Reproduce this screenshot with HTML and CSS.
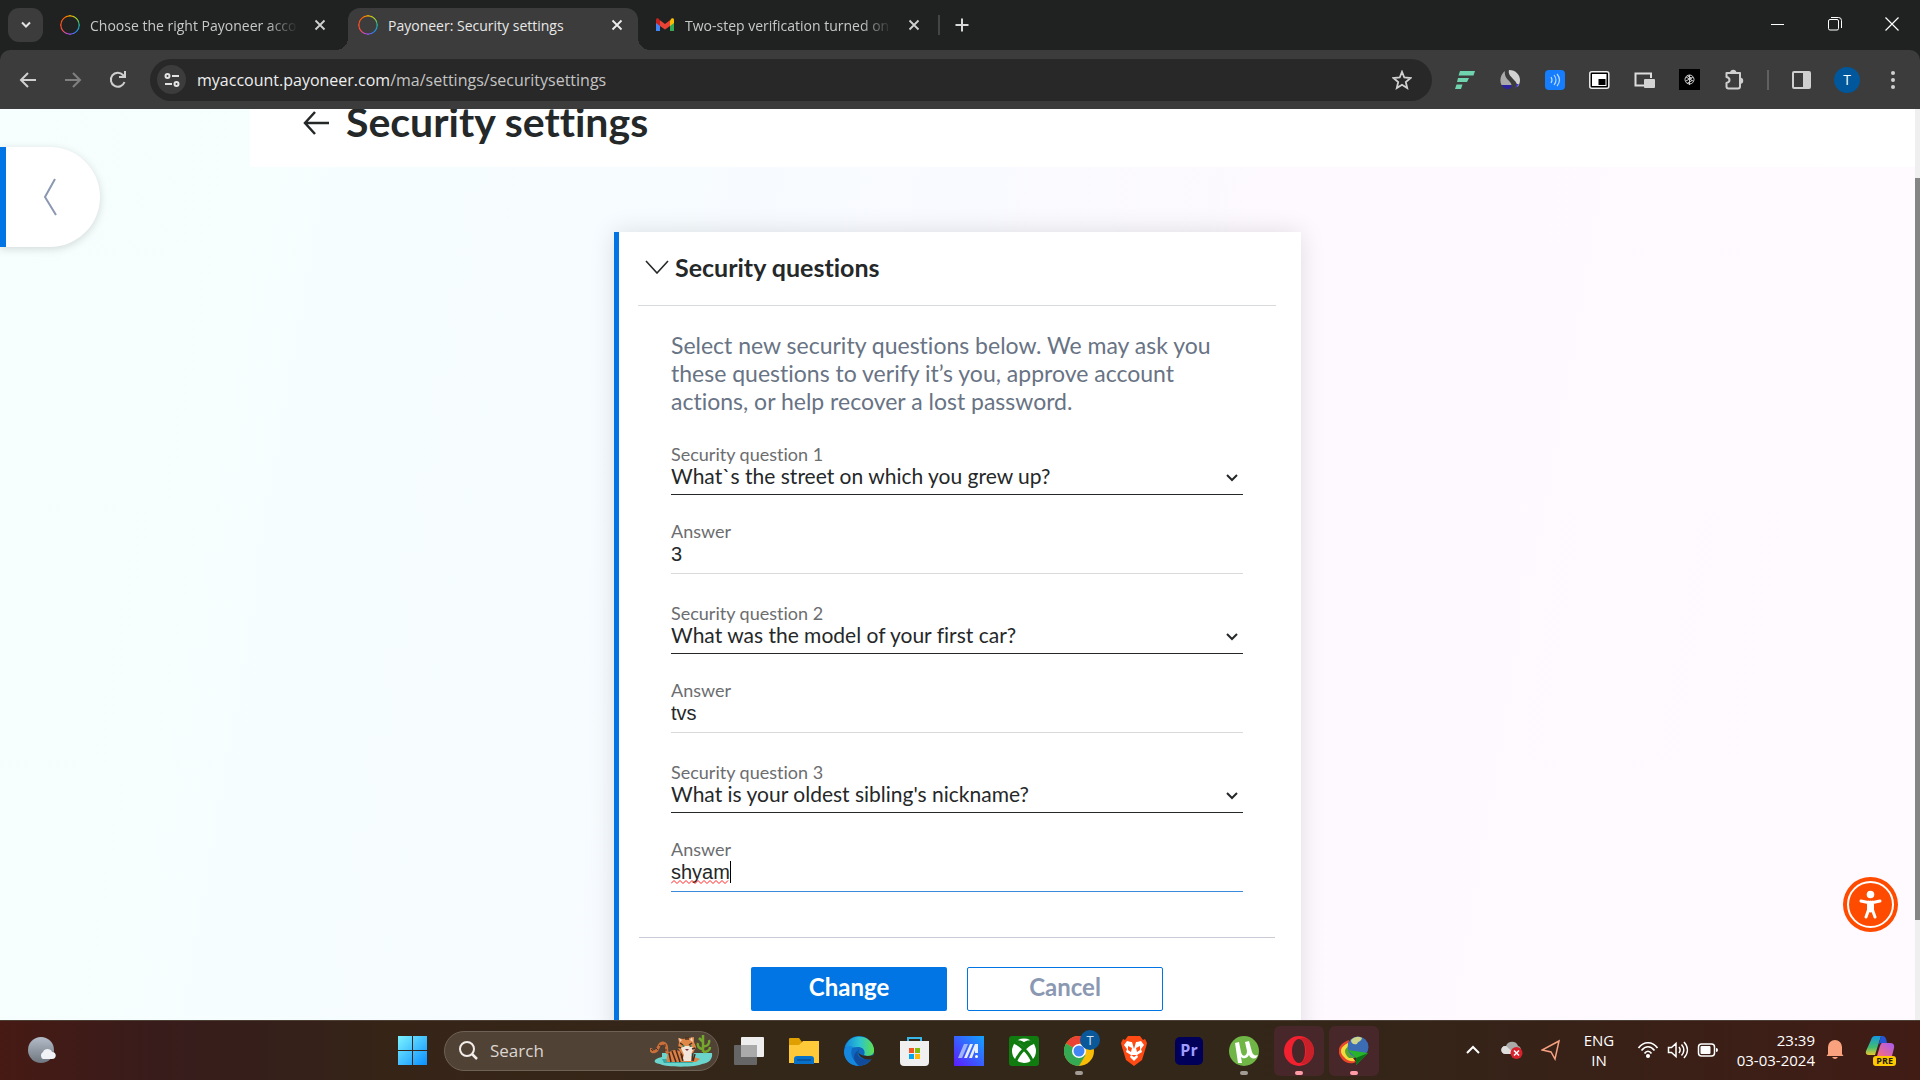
FILE: index.html
```html
<!DOCTYPE html>
<html lang="en">
<head>
<meta charset="utf-8">
<title>Payoneer: Security settings</title>
<link rel="stylesheet" href="styles.css">
</head>
<body>
<header class="tabstrip">
  <button class="tab-search" aria-label="Search tabs"><svg width="12" height="8" viewBox="0 0 12 8"><path d="M2 1.5l4 4 4-4" fill="none" stroke="#e3e3e3" stroke-width="2"/></svg></button>
  <div class="tab first">
    <span class="ring"></span>
    <span class="tab-title fade">Choose the right Payoneer acco</span>
    <button class="tab-close" aria-label="Close tab"><svg width="12" height="12" viewBox="0 0 12 12"><path d="M1.500 1.500l9 9m0-9l-9 9" stroke="#d0d0d0" stroke-width="1.800"/></svg></button>
  </div>
  <div class="tab active">
    <span class="ring"></span>
    <span class="tab-title">Payoneer: Security settings</span>
    <button class="tab-close" aria-label="Close tab"><svg width="12" height="12" viewBox="0 0 12 12"><path d="M1.500 1.500l9 9m0-9l-9 9" stroke="#eee" stroke-width="1.800"/></svg></button>
  </div>
  <div class="tab last">
    <svg width="20" height="20" viewBox="0 0 20 20"><path d="M1 5v11h4V8z" fill="#4285f4"/><path d="M19 5v11h-4V8z" fill="#34a853"/><path d="M1 4.500V8l4 3V5.600L3.500 3.500C2.300 2.700 1 3.500 1 4.500z" fill="#c5221f"/><path d="M19 4.500V8l-4 3V5.600l1.500-2.100c1.200-.8 2.500 0 2.500 1z" fill="#fbbc04"/><path d="M5 5.300l5 3.700 5-3.700V11l-5 3.500L5 11z" fill="#ea4335"/></svg>
    <span class="tab-title fade">Two-step verification turned on</span>
    <button class="tab-close" aria-label="Close tab"><svg width="12" height="12" viewBox="0 0 12 12"><path d="M1.500 1.500l9 9m0-9l-9 9" stroke="#d0d0d0" stroke-width="1.800"/></svg></button>
  </div>
  <span class="tab-sep"></span>
  <button class="new-tab" aria-label="New tab"><svg width="14" height="14" viewBox="0 0 14 14"><path d="M7 .5v13M.5 7h13" stroke="#d8d8d8" stroke-width="2"/></svg></button>
  <div class="window-controls">
    <button aria-label="Minimize"><svg width="14" height="14" viewBox="0 0 14 14"><path d="M0 7.500h13" stroke="#fff"/></svg></button>
    <button aria-label="Restore"><svg width="14" height="14" viewBox="0 0 14 14" fill="none" stroke="#fff"><rect x=".5" y="2.500" width="10" height="10.500" rx="1.500"/><path d="M3 .5h7.500a3 3 0 0 1 3 3V11"/></svg></button>
    <button aria-label="Close"><svg width="14" height="14" viewBox="0 0 14 14"><path d="M.5.5l13 13m0-13l-13 13" stroke="#fff" stroke-width="1.200"/></svg></button>
  </div>
</header>

<nav class="toolbar" aria-label="Browser toolbar">
  <button aria-label="Back"><svg width="20" height="20" viewBox="0 0 20 20"><path d="M18 10H3m7-7l-7 7 7 7" fill="none" stroke="#d0d0d0" stroke-width="2"/></svg></button>
  <button aria-label="Forward"><svg width="20" height="20" viewBox="0 0 20 20"><path d="M2 10h15m-7-7l7 7-7 7" fill="none" stroke="#808080" stroke-width="2"/></svg></button>
  <button aria-label="Reload"><svg width="20" height="20" viewBox="0 0 20 20"><path d="M16.500 12A7 7 0 1 1 15 5l2 2" fill="none" stroke="#d0d0d0" stroke-width="2"/><path d="M11 8h7V1h-2v5h-5z" fill="#d0d0d0"/></svg></button>
  <div class="omnibox">
    <button class="site-info" aria-label="Site information"><svg width="18" height="18" viewBox="0 0 18 18" fill="none" stroke="#e3e3e3" stroke-width="2"><circle cx="4.500" cy="5" r="2"/><path d="M9 5h7M2 13h7"/><circle cx="13.500" cy="13" r="2"/></svg></button>
    <p class="url">myaccount.payoneer.com<span>/ma/settings/securitysettings</span></p>
    <button class="star" aria-label="Bookmark"><svg width="20" height="20" viewBox="0 0 20 20"><path d="M10 1.800l2.300 5.700 6.200.5-4.700 4 1.400 6-5.200-3.200L4.800 18l1.400-6-4.700-4 6.200-.5z" fill="none" stroke="#d0d0d0" stroke-width="1.800"/></svg></button>
  </div>
  <div class="extensions">
    <button aria-label="Tasks extension"><svg width="20" height="20" viewBox="0 0 20 20" fill="#6fd3ad"><path d="M5 1h15l-1.500 4.500H3.500zM3 8h11l-2 4H2zM1.500 14.500h6L6 19H0z"/></svg></button>
    <button aria-label="Similarweb"><svg width="20" height="20" viewBox="0 0 20 20"><path d="M5 1C1 4-1 10 1.500 15h10c0-4-8-6-6.500-14z" fill="#aaa"/><path d="M1.500 15c3 5 8 5 10 2v-2z" fill="#2c22a0"/><path d="M9 0c7 0 11 5 11 10 0 3-1 5-2.500 7C18 10 7 7 9 0z" fill="#d3d3d3"/><path d="M16.500 14h2.500l-4 5z" fill="#4136cf"/></svg></button>
    <button aria-label="Reader"><svg width="20" height="20" viewBox="0 0 20 20"><rect width="20" height="20" rx="4" fill="#167dff"/><path d="M6 7q2 3 0 6M9 5q4 5 0 10M12 4q5 6 0 12" fill="none" stroke="#b9d9ff" stroke-width="1.200"/></svg></button>
    <button aria-label="Picture in picture"><svg width="21" height="20" viewBox="0 0 21 20"><rect x=".8" y="1.800" width="19" height="16.500" rx="2" fill="#000" stroke="#eee" stroke-width="1.500"/><rect x="3" y="4" width="14.500" height="12" fill="#fff"/><rect x="9.500" y="9" width="7" height="6" fill="#000"/></svg></button>
    <button aria-label="Pop out"><svg width="21" height="20" viewBox="0 0 21 20"><path d="M17 8V3.500H1.500v12H10" fill="none" stroke="#ddd" stroke-width="2"/><rect x="10" y="9" width="11" height="9" rx="1" fill="#d3d3d3"/></svg></button>
    <button aria-label="Assistant"><svg width="21" height="21" viewBox="0 0 21 21"><rect width="21" height="21" fill="#000"/><g fill="none" stroke="#ccc"><circle cx="10.500" cy="10.500" r="4.500"/><path d="M7 8l7 4m0-4l-7 4m3.500-6v10M8 14.500l5-3M8 6.500l5 3"/></g></svg></button>
    <button aria-label="Extensions"><svg width="21" height="21" viewBox="0 0 21 21"><path d="M2.500 4H16v13.500q0 2-2 2H4.500q-2 0-2-2V14c4-1 4-5 0-6z" fill="none" stroke="#d0d0d0" stroke-width="2" stroke-linejoin="round"/><path d="M6 3.500a3.300 3.300 0 0 1 6.500 0zM16.500 8.500a3.300 3.300 0 0 1 0 6.500z" fill="#d0d0d0"/></svg></button>
  </div>
  <span class="toolbar-sep"></span>
  <button aria-label="Side panel"><svg width="19" height="20" viewBox="0 0 19 20"><rect x="1" y="2" width="17" height="16" rx="1" fill="none" stroke="#d0d0d0" stroke-width="2"/><path d="M11 2h7v16h-7z" fill="#d0d0d0"/></svg></button>
  <button class="avatar" aria-label="Profile">T</button>
  <button aria-label="Menu"><svg width="6" height="20" viewBox="0 0 6 20" fill="#d0d0d0"><circle cx="3" cy="3" r="2"/><circle cx="3" cy="10" r="2"/><circle cx="3" cy="17" r="2"/></svg></button>
</nav>

<main class="viewport">
  <div class="page">
    <header class="page-header">
      <a href="#" aria-label="Back"><svg width="27" height="24" viewBox="0 0 27 24"><path d="M26 12H2M12 1L2 12l10 11" fill="none" stroke="#252829" stroke-width="2.500"/></svg></a>
      <h1>Security settings</h1>
    </header>
    <button class="collapse" aria-label="Open menu"><svg width="14" height="38" viewBox="0 0 14 38"><path d="M12 1L2 19l11 18" fill="none" stroke="#8b98b2" stroke-width="2"/></svg></button>
    <form class="card">
      <h2><svg width="24" height="14" viewBox="0 0 24 14"><path d="M1 1l11 12L23 1" fill="none" stroke="#252829" stroke-width="1.600"/></svg>Security questions</h2>
      <div class="fields">
        <p class="intro">Select new security questions below. We may ask you<br>these questions to verify it’s you, approve account<br>actions, or help recover a lost password.</p>
        <div class="question">
          <label for="q1">Security question 1</label>
          <div class="select-wrap"><select id="q1"><option>What`s the street on which you grew up?</option></select><svg width="12" height="8" viewBox="0 0 12 8"><path d="M1 1l5 5 5-5"/></svg></div>
          <label for="a1">Answer</label>
          <div class="input-wrap"><input id="a1" type="text" value="3"></div>
        </div>
        <div class="question">
          <label for="q2">Security question 2</label>
          <div class="select-wrap"><select id="q2"><option>What was the model of your first car?</option></select><svg width="12" height="8" viewBox="0 0 12 8"><path d="M1 1l5 5 5-5"/></svg></div>
          <label for="a2">Answer</label>
          <div class="input-wrap"><input id="a2" type="text" value="tvs"></div>
        </div>
        <div class="question">
          <label for="q3">Security question 3</label>
          <div class="select-wrap"><select id="q3"><option>What is your oldest sibling's nickname?</option></select><svg width="12" height="8" viewBox="0 0 12 8"><path d="M1 1l5 5 5-5"/></svg></div>
          <label for="a3">Answer</label>
          <div class="input-wrap"><input id="a3" class="focused" type="text" value="shyam" spellcheck="false"><svg class="squiggle" width="58" height="4" viewBox="0 0 58 4"><path d="M0 3.500L3 .5l3 3 3-3 3 3 3-3 3 3 3-3 3 3 3-3 3 3 3-3 3 3 3-3 3 3 3-3 3 3 3-3 3 3 3-3" fill="none" stroke="#f22"/></svg><span class="caret"></span></div>
        </div>
      </div>
      <div class="actions">
        <button type="button" class="primary">Change</button>
        <button type="button" class="secondary">Cancel</button>
      </div>
    </form>
    <button class="accessibility" aria-label="Accessibility"><svg width="55" height="55" viewBox="0 0 55 55"><circle cx="27.500" cy="27.500" r="27.500" fill="#ff4b00"/><circle cx="27.500" cy="27.500" r="22.500" fill="none" stroke="#fff" stroke-width="2"/><circle cx="27.500" cy="17.500" r="3.800" fill="#fff"/><path d="M18 24l7 1.500h5L37 24M25.500 25v8L23 40M29.500 25v8L32 40M27.500 25v9" fill="none" stroke="#fff" stroke-width="3" stroke-linecap="round"/></svg></button>
  </div>
  <div class="scrollbar"><div class="thumb"></div></div>
</main>

<footer class="taskbar">
  <button class="weather" aria-label="Weather"><svg width="28" height="28" viewBox="0 0 28 28"><defs><linearGradient id="moon" x2="0" y2="1"><stop stop-color="#b3bcc8"/><stop offset="1" stop-color="#6f7780"/></linearGradient></defs><circle cx="13" cy="13" r="13" fill="url(#moon)"/><path d="M15 22a4 4 0 0 1 0-7c1-4 8-4 9 0 5 0 5 7 0 7z" fill="#f0f2f6"/></svg></button>
  <div class="apps">
    <button class="start" aria-label="Start"><svg width="29" height="29" viewBox="0 0 29 29"><defs><linearGradient id="win" gradientUnits="userSpaceOnUse" x1="0" y1="0" x2="29" y2="29"><stop stop-color="#7cf3ff"/><stop offset="1" stop-color="#0a8fff"/></linearGradient></defs><path d="M0 0h14v14H0zM15 0h14v14H15zM0 15h14v14H0zM15 15h14v14H15z" fill="url(#win)"/></svg></button>
    <button class="search">
      <svg width="20" height="20" viewBox="0 0 20 20"><circle cx="8" cy="8" r="7" fill="none" stroke="#f3eeea" stroke-width="2"/><path d="M13 13l5 5" stroke="#f3eeea" stroke-width="2.500"/></svg>
      <span>Search</span>
      <svg class="tiger" width="64" height="34" viewBox="0 0 64 34"><path d="M12 19h50c1 6-3 10-10 11-4 3-34 4-42 0-8-1-7-5 2-7z" fill="#6bd5cd"/><path d="M12 25h36l-6 4H14z" fill="#35a7a5"/><path d="M19 19C14 20 20 10 13 9 8 9 9 15 6 17c-3 2-6 0-5-3" fill="none" stroke="#c9703a" stroke-width="3"/><path d="M1 15l2 2m3-3l2 2m1-5l3 2m3-3v3m2 3h-3" stroke="#5b2c1e"/><path d="M17 28c-2-12 9-15 15-9l18 6-4 3z" fill="#db8143"/><path d="M19 19l2 9m1-11l4 11m0-12l4 12m1-10l2 8m12-6l-2 7m-3-7l-1 7" stroke="#4a2720" stroke-width="1.500"/><path d="M28 4l5 1 6-1 5-1v5l2 5-3 6-5 4-6-3-4-6 1-6z" fill="#df8848"/><path d="M29 4l3 2-2 2zm13-1l-2 3 3 2z" fill="#f3d4c1"/><path d="M31 14l4-2h4l5 2-2 4-1 3 1 6H32l2-6z" fill="#f3e6da"/><path d="M30 9l3 2m9-2l-3 2M28 13l3 1m14 0l-3 1M36 3v3m2-3v3m-7 14l2 7m10-8l-1 8" stroke="#49301f" stroke-width="1.500"/><circle cx="33.500" cy="12" r="1" fill="#286"/><circle cx="40.500" cy="12" r="1" fill="#286"/><path d="M35 15h4l-2 2z" fill="#734"/><path d="M53 18V1m0 14c-4 0-6-3-5-6m5 3c5 1 7-3 6-6m-6 2l-4-4m4 14c4 0 7-2 7-5" fill="none" stroke="#75a72d" stroke-width="2.500"/></svg>
    </button>
    <button aria-label="Task view"><svg width="30" height="28" viewBox="0 0 30 28"><rect y="8" width="23" height="20" rx="1" fill="#666"/><rect x="7" width="23" height="20" rx="1" fill="#eee"/><path d="M7 8h16v12H7z" fill="#aaa"/></svg></button>
    <button aria-label="File Explorer"><svg width="30" height="28" viewBox="0 0 30 28"><path d="M0 2q0-1 1-1h9l3 4-3 5H0z" fill="#e0a000"/><path d="M0 8h10l4-4h16v22H0z" fill="#ffc93a"/><path d="M5 27v-5q0-3 3-3h14q3 0 3 3v5z" fill="#0871ca"/><path d="M8 23h14" stroke="#06407e"/></svg></button>
    <button aria-label="Edge"><svg width="30" height="30" viewBox="0 0 30 30"><defs><linearGradient id="edge" x2="1"><stop stop-color="#1488dc"/><stop offset=".5" stop-color="#2cc3d2"/><stop offset="1" stop-color="#60e04b"/></linearGradient></defs><circle cx="15" cy="15" r="15" fill="#0d68be"/><path d="M1 11C4 2 12-1 19 1c8 2 12 10 11 15-1 4-6 5-10 3 2-4-1-8-6-8C8 11 3 13 1 11z" fill="url(#edge)"/><path d="M0 15c1-5 5-6 9-4-4 5-1 14 7 19C6 30 0 24 0 15z" fill="#1588de"/><path d="M15 14c-4 4 0 12 13 8-3 5-9 8-13 8-5-4-8-12 0-16z" fill="#114c9c"/><path d="M15 13c-3 4 3 9 15 6v4c-10 2-18-3-15-10z" fill="#342819"/></svg></button>
    <button aria-label="Microsoft Store"><svg width="29" height="30" viewBox="0 0 29 30"><path d="M8 6V2h13v4" fill="none" stroke="#38b8e8" stroke-width="2"/><path d="M0 5h29v21q0 4-4 4H4q-4 0-4-4z" fill="#f0f0f0"/><path d="M9 12h5v5H9z" fill="#f35325"/><path d="M15 12h5v5h-5z" fill="#81bc06"/><path d="M9 18h5v5H9z" fill="#05a6f0"/><path d="M15 18h5v5h-5z" fill="#ffba08"/></svg></button>
    <button aria-label="MyASUS"><svg width="30" height="30" viewBox="0 0 30 30"><defs><linearGradient id="asus" x1="0" y1="1" x2="1" y2="0"><stop stop-color="#5d1bff"/><stop offset="1" stop-color="#12a4ff"/></linearGradient></defs><path d="M0 0h30v30H0z" fill="url(#asus)"/><path d="M4 22L10 8h4L8 22z" fill="#9fb6ff"/><path d="M10 22l6-14h3l-6 14zM15 22l6-14h3v9h-3v-3l-3 8z" fill="#e6eeff"/><circle cx="22.500" cy="20.500" r="1.500" fill="#fff"/></svg></button>
    <button aria-label="Xbox"><svg width="30" height="30" viewBox="0 0 30 30"><rect width="30" height="30" rx="3" fill="#107c10"/><circle cx="15" cy="15" r="12" fill="#fff"/><path d="M5.500 6.500c4 1 14 9 18 19m1-19c-4 1-14 9-18 19" fill="none" stroke="#107c10" stroke-width="3"/><path d="M8 5c3-1 5 0 7 1 2-1 4-2 7-1l2 1.500c-3 0-6 2-9 5-3-3-6-5-9-5z" fill="#107c10"/><path d="M9 3.500q6-2 12 0-3 0-6 2-3-2-6-2z" fill="#fff"/></svg></button>
    <button class="running" aria-label="Chrome"><svg width="30" height="30" viewBox="0 0 30 30"><circle cx="15" cy="15" r="15" fill="#fbbc05"/><path d="M15 15L2 7.500A15 15 0 0 1 28 7.500H15z" fill="#ea4335"/><path d="M2 7.500A15 15 0 0 0 15 30l6.500-11L15 15z" fill="#34a853"/><circle cx="15" cy="15" r="7" fill="#fff"/><circle cx="15" cy="15" r="5.500" fill="#4285f4"/></svg><span class="profile-badge">T</span></button>
    <button aria-label="Brave"><svg width="26" height="30" viewBox="0 0 26 30"><path d="M7 0h12l3 4 2-1 2 4-1 4-4 13-8 6-8-6L1 11 0 7l2-4 2 1z" fill="#ff4a13"/><path d="M6 5l4 1h6l4-1 3 4-3 4 1 3-5 3 1 2-4 4-4-4 1-2-5-3 1-3-3-4z" fill="#fff"/><path d="M7 10l4 2-1 4-3-2zm12 0l-4 2 1 4 3-2zM10 19h6l-3 2zM11 6h4l-2 7z" fill="#ff4a13"/></svg></button>
    <button aria-label="Premiere Pro"><span class="premiere">Pr</span></button>
    <button class="running" aria-label="uTorrent"><svg width="30" height="30" viewBox="0 0 30 30"><circle cx="15" cy="15" r="15" fill="#70b646"/><path d="M6 7l4-1 2 10c1 5 6 5 6-1L16 6l4-1 3 11c1 3 3 4 6 3l-2 3c-3 1-6 0-7-3-2 4-6 4-8 2l1 6H9z" fill="#fff"/></svg></button>
    <button class="running tinted" aria-label="Opera"><svg width="30" height="30" viewBox="0 0 30 30"><path fill-rule="evenodd" d="M15 0a15 15 0 1 0 0 30 15 15 0 0 0 0-30zm0 3c4 0 6 6 6 12s-2 12-6 12-7-6-7-12 3-12 7-12z" fill="#f3202f"/><path d="M16 3c5-3 9 0 11 3 5 8 3 14-1 19-3 3-7 4-10 2 8-2 8-22 0-24z" fill="#c92029"/></svg></button>
    <button class="running tinted" aria-label="Internet Download Manager"><svg width="30" height="30" viewBox="0 0 30 30"><path d="M10 4C-1 8-3 16 3 23c4 5 10 5 14 3L9 16z" fill="#e8452c"/><path d="M9 7C1 11 0 16 5 21c3 4 8 5 11 4l-6-9z" fill="#f3db3d"/><path d="M9 11c-5 2-3 8 1 11h6l-5-8z" fill="#56a633"/><circle cx="19" cy="11" r="10.500" fill="#3c6cb4"/><path d="M12 4c4-4 8-4 11-2-1 4-4 3-5 6-4 1-6-1-6-4z" fill="#cfd48c"/><path d="M9 14l20 3-12 12v-7z" fill="#27b42b"/><path d="M17 22l12-5-12 12z" fill="#0d6e15"/></svg></button>
  </div>
  <div class="tray">
    <button aria-label="Hidden icons"><svg width="14" height="10" viewBox="0 0 14 10"><path d="M1 8l6-6 6 6" fill="none" stroke="#fff" stroke-width="2"/></svg></button>
    <button aria-label="OneDrive"><svg width="22" height="20" viewBox="0 0 22 20"><path d="M4 14C-2 13 0 5 5 6c2-6 11-5 12 0 4 1 4 7 0 8z" fill="#aaa"/><path d="M4 14C-2 13 0 5 5 6l9 8z" fill="#ddd"/><circle cx="15.500" cy="13" r="6" fill="#d8232f"/><path d="M13 10.500l5 5m0-5l-5 5" stroke="#fff" stroke-width="1.500"/></svg></button>
    <button aria-label="Location"><svg width="20" height="22" viewBox="0 0 20 22"><path d="M18 2L1 11l9 2 4 7z" fill="none" stroke="#f6a180" stroke-width="1.500"/></svg></button>
    <button class="language">ENG<br>IN</button>
    <button class="status" aria-label="Network, volume and battery">
      <svg width="22" height="18" viewBox="0 0 22 18" fill="none" stroke="#fff" stroke-width="1.700"><path d="M1.500 7c5-7 14-7 19 0M4.500 9.500c4-5 9-5 13 0M7.500 12.500c2-3 5-3 7 0"/><circle cx="11" cy="15" r="1.200" fill="#fff"/></svg>
      <svg width="22" height="18" viewBox="0 0 22 18" fill="none" stroke="#fff" stroke-width="1.500"><path d="M1.500 6.500h3L9 2.500v13l-4.500-4h-3zM12 6c1.500 2 1.500 4 0 6M14.500 3.500c3 3.500 3 7.500 0 11M17 1c4.500 5 4.500 11 0 16"/></svg>
      <svg width="22" height="18" viewBox="0 0 22 18"><rect x="1.500" y="3" width="16" height="12" rx="3" fill="none" stroke="#fff" stroke-width="1.500"/><rect x="3.500" y="5" width="10" height="8" rx="1" fill="#fff"/><path d="M19 7q2 0 2 2t-2 2z" fill="#fff"/></svg>
    </button>
    <button class="clock">23:39<br>03-03-2024</button>
    <button aria-label="Notifications"><svg width="18" height="20" viewBox="0 0 18 20" fill="#faa27e"><path d="M2 14V7a7 7 0 0 1 14 0v7l1.500 2H.5zM6 17h6q-3 4-6 0z"/></svg></button>
    <button class="copilot" aria-label="Copilot"><svg width="30" height="28" viewBox="0 0 30 28"><defs><linearGradient id="cpa" x2="0" y2="1"><stop stop-color="#1498df"/><stop offset=".6" stop-color="#42bd70"/><stop offset="1" stop-color="#ecc62d"/></linearGradient><linearGradient id="cpb" x1="1" x2="0" y2="1"><stop stop-color="#a75af5"/><stop offset="1" stop-color="#fa6d76"/></linearGradient></defs><path d="M16 0h-6Q7 0 6 4L1 15q-1 4 3 4h6l4-13z" fill="url(#cpa)"/><path d="M15 0h3q3 0 4 7h-6q-2 0-3 4L16 0z" fill="#2455d8"/><path d="M17 7h8q5 0 4 5l-2 8H12l3-10q1-3 2-3z" fill="url(#cpb)"/></svg><span class="pre">PRE</span></button>
  </div>
</footer>
</body>
</html>
```
FILE: styles.css
```css
* { box-sizing: border-box; }

body {
  margin: 0;
  height: 100vh;
  display: flex;
  flex-direction: column;
  overflow: hidden;
  font-family: "Open Sans", sans-serif;
  background: #1f2221;
}

button {
  display: flex;
  align-items: center;
  justify-content: center;
  padding: 0;
  border: 0;
  background: none;
  font: inherit;
  color: inherit;
}

svg { display: block; flex: none; }

/* Tab strip */
.tabstrip {
  display: flex;
  height: 50px;
  flex: none;
  padding: 8px 0 0 8px;
  background: #1f2221;
  color: #c8c8c8;
}
.tab-search {
  width: 35px;
  height: 34px;
  margin-right: 9px;
  border-radius: 11px;
  background: #3c3c3c;
}
.tab {
  display: flex;
  align-items: center;
  gap: 10px;
  width: 290px;
  padding: 0 13px 8px 10px;
  font-size: 14px;
}
.tab.first { width: 296px; padding-left: 8px; padding-right: 20px; }
.tab.last { width: 300px; padding-left: 17px; padding-right: 16px; }
.tab.active {
  position: relative;
  background: #3c3c3c;
  color: #e8e8e8;
  border-radius: 12px 12px 0 0;
}
.tab.active::before,
.tab.active::after {
  content: "";
  position: absolute;
  bottom: 0;
  width: 12px;
  height: 12px;
}
.tab.active::before {
  right: 100%;
  background: radial-gradient(circle at 0 0, transparent 12px, #3c3c3c 12px);
}
.tab.active::after {
  left: 100%;
  background: radial-gradient(circle at 100% 0, transparent 12px, #3c3c3c 12px);
}
.ring {
  width: 20px;
  height: 20px;
  flex: none;
  border-radius: 50%;
  background: conic-gradient(#ffb300, #9bd52c 45deg, #1fb6a0 90deg, #2280f0 140deg, #b44df0 190deg, #ff4a3c 240deg, #ff5a00 320deg, #ffb300);
  -webkit-mask: radial-gradient(circle, transparent 8px, #000 9px);
  mask: radial-gradient(circle, transparent 8px, #000 9px);
}
.tab-title {
  flex: 1;
  overflow: hidden;
  white-space: nowrap;
}
.fade {
  -webkit-mask: linear-gradient(90deg, #000 85%, transparent);
  mask: linear-gradient(90deg, #000 85%, transparent);
}
.tab-close { width: 16px; height: 16px; margin-left: 4px; }
.tab-sep { width: 2px; height: 20px; margin-top: 7px; background: #444; }
.new-tab { width: 44px; height: 34px; }
.window-controls { display: flex; margin-left: auto; padding-bottom: 10px; }
.window-controls button { width: 57px; }

/* Toolbar */
.toolbar {
  display: flex;
  align-items: center;
  height: 59px;
  flex: none;
  padding: 0 5px;
  border-radius: 10px 10px 0 0;
  background: #3c3c3c;
}
.toolbar > button { width: 45px; height: 42px; }
.omnibox {
  display: flex;
  align-items: center;
  flex: 1;
  height: 42px;
  margin: 0 10px;
  padding: 0 20px 0 7px;
  border-radius: 21px;
  background: #282828;
}
.site-info {
  width: 29px;
  height: 29px;
  border-radius: 50%;
  background: #3c3c3c;
}
.url { flex: 1; margin: 0 0 0 11px; font-size: 16px; color: #eee; }
.url span { color: #c4c4c4; }
.extensions { display: flex; }
.extensions button { width: 45px; height: 42px; }
.toolbar-sep { width: 2px; height: 20px; margin: 0 10px; background: #606060; }
.toolbar .avatar {
  width: 26px;
  height: 26px;
  margin: 0 10px;
  border-radius: 50%;
  background: #01579b;
  color: #fff;
  font-size: 14px;
}

/* Page */
.viewport {
  display: flex;
  flex: 1;
  min-height: 0;
  overflow: hidden;
}
.page {
  position: relative;
  flex: 1;
  overflow: hidden;
  background: linear-gradient(100deg, #f6fffd, #f6fcff 30%, #f9faff 48%, #fef9fe 65%, #fffaff);
  font-family: Lato, sans-serif;
  font-variant-ligatures: none;
  color: #252829;
}
.page-header {
  display: flex;
  align-items: flex-end;
  gap: 16px;
  height: 58px;
  margin-left: 250px;
  padding: 0 0 21px 53px;
  background: #fff;
}
.page-header h1 { margin: 0; font-size: 41px; line-height: 48px; font-weight: 700; }
.page-header a { padding-bottom: 11px; }
.collapse {
  position: absolute;
  left: 0;
  top: 38px;
  width: 100px;
  height: 100px;
  padding-right: 6px;
  border-left: 6px solid #0075e3;
  border-radius: 0 50px 50px 0;
  background: #fff;
  box-shadow: 0 2px 8px #00000026;
}
.card {
  width: 687px;
  margin: 65px auto 0;
  padding-bottom: 40px;
  border-left: 5px solid #0075e3;
  background: #fff;
  box-shadow: 0 0 24px #0000001f;
}
.card h2 {
  display: flex;
  align-items: center;
  gap: 6px;
  height: 74px;
  margin: 0 25px 0 19px;
  padding: 0 0 4px 7px;
  border-bottom: 1px solid #d8dadb;
  font-size: 25px;
}
.fields { padding: 25px 58px 45px 52px; }
.intro { margin: 0 0 28px; font-size: 23px; line-height: 28px; color: #687384; white-space: nowrap; }
.question + .question { margin-top: 28px; }
label { display: block; font-size: 18px; line-height: 22px; color: #6b6d6f; }
.select-wrap, .input-wrap { position: relative; }
.select-wrap { margin: -2px 0 25px; }
.select-wrap svg {
  position: absolute;
  right: 5px;
  top: 11px;
  fill: none;
  stroke: #252829;
  stroke-width: 2;
  pointer-events: none;
}
select, input {
  display: block;
  width: 100%;
  margin: 0;
  border: 0;
  border-radius: 0;
  outline: 0;
  background: none;
  color: #252829;
}
select {
  appearance: none;
  height: 32px;
  padding: 0 0 6px;
  border-bottom: 1px solid #252829;
  font-family: Lato, sans-serif;
  font-size: 21px;
  font-variant-ligatures: none;
}
input {
  height: 32px;
  padding: 0 0 7px;
  border-bottom: 1px solid #d8dadb;
  font-family: "Liberation Sans", sans-serif;
  font-size: 20px;
}
input.focused { border-color: #3a8ade; }
.squiggle { position: absolute; left: 0; top: 20px; }
.caret { position: absolute; left: 59px; top: 1px; width: 1px; height: 22px; background: #000; }
.actions {
  display: flex;
  justify-content: center;
  gap: 20px;
  margin: 0 26px 0 20px;
  padding-top: 29px;
  border-top: 1px solid #cbcbd8;
}
.actions button { width: 196px; height: 44px; padding-bottom: 5px; border-radius: 2px; font-size: 24px; font-weight: 700; }
.primary { background: #0075e3; color: #fff; }
.actions .secondary { border: 1px solid #0075e3; color: #8b98b2; background: #fff; }
.accessibility { position: absolute; right: 17px; bottom: 88px; }
.scrollbar { width: 5px; padding-top: 69px; background: #efefef; }
.thumb { height: 742px; background: #858585; }

/* Taskbar */
.taskbar {
  display: flex;
  align-items: center;
  height: 60px;
  flex: none;
  border-top: 1px solid #4c4036;
  background: linear-gradient(90deg, #471a14, #381c1b 8%, #35201a 15%, #362417 20%, #332719 40%, #332719 65%, #372218 80%, #401c15);
  color: #fff;
}
.weather { width: 84px; height: 50px; }
.apps { display: flex; align-items: center; gap: 5px; margin-left: 303px; }
.apps > button { position: relative; width: 50px; height: 50px; border-radius: 6px; }
.apps .start { width: 52px; padding-right: 2px; }
.apps .search {
  width: 275px;
  height: 40px;
  justify-content: flex-start;
  padding: 0 4px 0 14px;
  border: 1px solid #6e6156;
  border-radius: 20px;
  background: #514236;
  font-size: 17px;
  color: #dcd6d0;
}
.search span { margin-left: 11px; }
.tiger { margin-left: auto; }
.apps .tinted { background: #47272a; }
.running::after {
  content: "";
  position: absolute;
  bottom: 1px;
  left: 21px;
  width: 8px;
  height: 4px;
  border-radius: 2px;
  background: #a39c95;
}
.tinted::after { background: #ff9ba4; }
.profile-badge {
  position: absolute;
  left: 26px;
  top: 4px;
  width: 20px;
  border-radius: 50%;
  background: #0a5799;
  color: #cfe0f0;
  font-size: 13px;
  line-height: 20px;
}
.premiere {
  width: 28px;
  height: 28px;
  border-radius: 5px;
  background: #00005b;
  color: #9f9dff;
  font-size: 16px;
  font-weight: 700;
  line-height: 26px;
}
.tray {
  display: flex;
  align-items: center;
  margin-left: auto;
  padding: 0 16px 2px 0;
  font-size: 15px;
  line-height: 20px;
}
.tray > button { width: 39px; height: 50px; }
.tray .language { width: 58px; text-align: center; }
.tray .status { width: 100px; gap: 8px; }
.tray .clock { width: 87px; justify-content: flex-end; text-align: right; }
.tray .copilot { position: relative; width: 48px; margin-left: 2px; }
.pre {
  position: absolute;
  right: 8px;
  bottom: 9px;
  padding: 0 3px;
  border-radius: 3px;
  background: #ffc800;
  color: #201a00;
  font-size: 9px;
  font-weight: 700;
  line-height: 10px;
}
```
